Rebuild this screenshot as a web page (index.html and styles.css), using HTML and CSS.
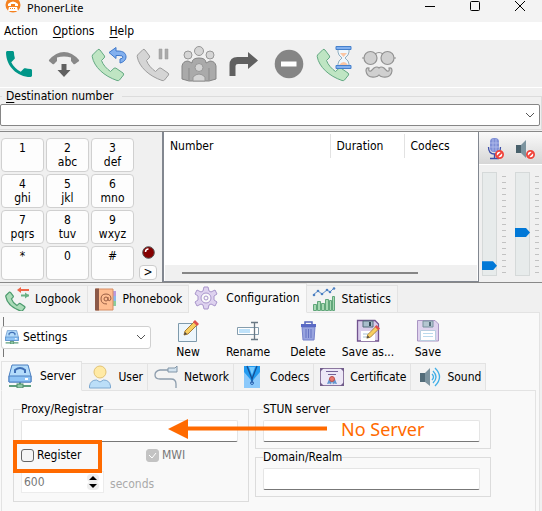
FILE: index.html
```html
<!DOCTYPE html>
<html lang="en">
<head>
<meta charset="utf-8">
<title>PhonerLite</title>
<link rel="stylesheet" href="styles.css">
</head>
<body>
<svg class="defs" aria-hidden="true">
  <symbol id="handset" viewBox="0 0 36 36">
    <path d="M1.500 9 7 3.500Q8 3 9 4L13.500 10Q14 11 13 12L10.500 14.500C12 19 16 23 19.500 25.500L23 22.300Q24 21.700 25 22.200L32 27Q33 28 32.500 29L28.500 34Q27.500 35 26 34.500C13 30 3 21 1.200 10.500Z"/>
  </symbol>
  <symbol id="server" viewBox="0 0 24 24">
    <path d="M12 18v4M1 22h22" stroke="#5d9e7c" stroke-width="2"/>
    <rect x="9" y="20" width="6" height="4" fill="#8fc7a5" stroke="#4c8b69"/>
    <path d="M4 1h16l3 11v6H1v-6z" fill="#b4dcfb" stroke="#4a7fc0"/>
    <path d="M1 12h22v6H1z" fill="#8fc4f5" stroke="#4a7fc0"/>
    <path d="M7 9V6q5-4 10 0v3" fill="none" stroke="#3f6fb5" stroke-width="2"/>
    <path d="M17 15h3" stroke="#fff" stroke-width="2"/>
  </symbol>
  <symbol id="blocked" viewBox="0 0 10 10">
    <circle cx="5" cy="5" r="4" fill="#fff" stroke="#f0433a" stroke-width="2"/>
    <path d="m2.500 7.500 5-5" stroke="#f0433a" stroke-width="2"/>
  </symbol>
  <symbol id="pencil" viewBox="0 0 16 16">
    <path d="m1 15 1-4 9-9 3 3-9 9z" fill="#f8cf62" stroke="#a67b36"/>
    <path d="m10 2 2-2 4 4-2 2z" fill="#e0504e"/>
    <path d="m1 15 1-3 2 2z" fill="#444"/>
  </symbol>
</svg>
<div class="window">
  <header class="titlebar">
    <svg class="logo" viewBox="0 0 16 16"><circle cx="8" cy="5" r="7.500" fill="#f58220"/><path d="M3 4q5-5 10 0v2h-3V4H6v2H3z" fill="#fff"/><path d="M4 7h8l1 4H3z" fill="#fff"/><path d="M5 8.500h6" stroke="#f58220" stroke-dasharray="1 1"/></svg>
    <h1>PhonerLite</h1>
    <div class="winbuttons">
      <button aria-label="Minimize"><svg viewBox="0 0 12 12"><path d="M1 6.500h10"/></svg></button>
      <button aria-label="Maximize"><svg viewBox="0 0 12 12"><rect x="1.500" y="1.500" width="9" height="9" rx="1"/></svg></button>
      <button aria-label="Close"><svg viewBox="0 0 12 12"><path d="m1 1 10 10M11 1 1 11"/></svg></button>
    </div>
  </header>
  <nav class="menubar">
    <button>Action</button><button><u>O</u>ptions</button><button><u>H</u>elp</button>
  </nav>
  <div class="toolbar">
    <button aria-label="Call"><svg viewBox="0 0 36 36"><path transform="translate(.7 .7) scale(1.444)" fill="#009688" d="M6.620 10.790c1.440 2.830 3.760 5.140 6.590 6.590l2.200-2.200c.27-.27.67-.36 1.020-.24 1.120.37 2.330.57 3.570.57.55 0 1 .45 1 1V20c0 .55-.45 1-1 1-9.390 0-17-7.610-17-17 0-.55.45-1 1-1h3.500c.55 0 1 .45 1 1 0 1.250.2 2.450.57 3.570.11.350.03.74-.25 1.020z"/></svg></button>
    <button aria-label="Hang up"><svg viewBox="0 0 36 36"><path d="M3 14Q10 6 18 6t15 8q.500 1-.500 1.500L29 18q-1 .500-1.500 0L25 15v-3.500q-7-2-14 0V15l-3 3q-.500.500-1.500 0l-3-2.500q-1-.500-.500-1.500z" fill="#888"/><path d="M15.500 18h5v6h4L18 31l-6.500-7h4z" fill="#606060"/></svg></button>
    <button aria-label="Call back"><svg viewBox="0 0 36 36"><use href="#handset" fill="#bfe5c3" stroke="#63a982"/><path d="m18 6.500 7-5V5h2c5 0 8 2 8 6 0 3-3 5.500-6 6v-4q3-.500 3-2t-4-1.500h-3v3z" fill="#82b0ef" stroke="#3f78ca"/></svg></button>
    <button aria-label="Hold"><svg viewBox="0 0 36 36"><use href="#handset" fill="#d5d5d5" stroke="#9d9d9d"/><path d="M23 3h3v10h-3zM29 3h3v10h-3z" fill="#aaa" stroke="#999" stroke-width=".5"/></svg></button>
    <button aria-label="Conference"><svg viewBox="0 0 36 36"><g fill="#d5d5d5" stroke="#979797"><circle cx="7" cy="9" r="4"/><circle cx="29" cy="9" r="4"/><circle cx="18" cy="5" r="4.500"/><path d="M1 33V20q1-5 6-5l4 2q0-5 7-5t7 5l4-2q5 0 6 5v13l-7 2H8z" fill="#aaa" stroke="#858585"/><circle cx="18" cy="21.500" r="4"/><path d="M12 35V31q6-6 12 0v4z"/><path d="M8 22v12M28 22v12" stroke="#8b8b8b"/></g></svg></button>
    <button aria-label="Forward"><svg viewBox="0 0 36 36"><path d="M3.500 30V19q0-8 8-8H22V6l10 8.500L22 23v-5H12q-2.500 0-2.500 2v10z" fill="#606060"/></svg></button>
    <button aria-label="Reject"><svg viewBox="0 0 36 36"><circle cx="18" cy="18" r="14.300" fill="#858585"/><path d="M10 15.500h15.500v5H10z" fill="#fff"/></svg></button>
    <button aria-label="Auto answer"><svg viewBox="0 0 36 36"><use href="#handset" fill="#bfe5c3" stroke="#63a982"/><path d="M22 3v3q0 3 4 6-4 3-4 6v2h11v-2q0-3-4-6 4-3 4-6V3z" fill="#eef7fd" stroke="#91aec0"/><path d="M24 7h7l-3.500 4zM23 19q5-6 9 0z" fill="#fac6a4"/><path d="M20 .500h15v3H20zM20 19.500h15v3H20z" fill="#82b0ef" stroke="#4580cc"/></svg></button>
    <button aria-label="Anonymous"><svg viewBox="0 0 36 36"><g fill="#d0d0d0" stroke="#929292" stroke-width="1.200"><circle cx="9.500" cy="12" r="6.500"/><circle cx="26.500" cy="12" r="6.500"/><path d="M14 8q4-3 8 0M1 12h2M33 12h2" fill="none"/><path d="M18 22q2-2 5 0l3 3q3 1 2-3 3-1 3 3-1 7-9 6-3-.500-4-2-1 1.500-4 2-8 1-9-6 0-4 3-3-1 4 2 3l3-3q3-2 5 0z"/></g></svg></button>
  </div>
  <fieldset class="destination">
    <legend><label for="dest"><u>D</u>estination number</label></legend>
    <select id="dest"><option></option></select>
  </fieldset>

  <main class="dialer">
    <section class="keys">
      <div class="keypad">
        <button>1</button><button>2<br>abc</button><button>3<br>def</button>
        <button>4<br>ghi</button><button>5<br>jkl</button><button>6<br>mno</button>
        <button>7<br>pqrs</button><button>8<br>tuv</button><button>9<br>wxyz</button>
        <button>*</button><button>0</button><button>#</button>
      </div>
      <div class="side">
        <svg class="led" viewBox="0 0 13 13"><circle cx="6.500" cy="6.500" r="5.800" fill="#850000" stroke="#555"/><path d="M3.500 6q0-3 3-3" fill="none" stroke="#fff" stroke-width="1.500"/></svg>
        <button class="more">&gt;</button>
      </div>
    </section>
    <section class="calls">
      <table>
        <thead><tr><th class="number">Number</th><th>Duration</th><th>Codecs</th></tr></thead>
      </table>
      <div class="scrollbar"><div class="thumb"></div></div>
    </section>
    <section class="levels">
      <div class="mutes">
        <button aria-label="Mute microphone"><svg viewBox="0 0 20 24"><rect x="4" y="1" width="9" height="14" rx="4" fill="#7f8fd6"/><path d="M7 2v12M10 2v12M4 6h9M4 10h9" stroke="#adb8ea"/><path d="M2.500 10q0 7 6 7t6-7M8.500 17v4M4 21.500h9" fill="none" stroke="#3d4fa8" stroke-width="1.300"/><use href="#blocked" x="9" y="13" width="9" height="9"/></svg></button>
        <button aria-label="Mute speaker"><svg viewBox="0 0 20 24"><path d="M0 8h5v8H0z" fill="#49616c"/><path d="m5 8 5-5v18l-5-5z" fill="#7c949f"/><use href="#blocked" x="10" y="13" width="9" height="9"/></svg></button>
      </div>
      <div class="sliders">
        <input type="range" aria-label="Microphone level" min="0" max="100" value="5"><span class="ticks"></span>
        <input type="range" aria-label="Speaker level" min="0" max="100" value="41"><span class="ticks"></span>
      </div>
    </section>
  </main>

  <div class="tabs main-tabs" role="tablist">
    <button role="tab"><svg viewBox="0 0 24 24"><use href="#handset" y="3" width="22" height="22" fill="#aadbb7" stroke="#4c9a6d" stroke-width="2"/><path d="M24 8.500h-8" stroke="#69b184" stroke-width="2"/><path d="M24 3H14" stroke="#ef6548" stroke-width="2"/><path d="m12 3 4-3v6z" fill="#ef6548"/><path d="m24 8.500-4-3v6z" fill="#69b184"/></svg>Logbook</button>
    <button role="tab"><svg viewBox="0 0 24 24"><path d="M20 4h3v5h-3z" fill="#b89be0"/><path d="M20 9h3v5h-3z" fill="#8ab9ee"/><path d="M20 14h3v5h-3z" fill="#8ace9c"/><path d="M3 2h17v21H3z" fill="#ffbd91" stroke="#d68d65"/><path d="M2 1.500h4v22H2z" fill="#8c5948"/><circle cx="13" cy="12" r="2" fill="none" stroke="#995d43"/><path d="M15 10v3q2 2 3-1 0-5-5-5t-5 5q0 5 6 5" fill="none" stroke="#995d43"/></svg>Phonebook</button>
    <button role="tab" aria-selected="true"><svg viewBox="0 0 24 24"><path d="m9 5 1-4h4l1 4 2 1 4-2 2 4-3 2v4l3 2-2 4-4-2-2 1-1 4h-4l-1-4-2-1-4 2-2-4 3-2v-4L1 8l2-4 4 2z" fill="#ded2ef" stroke="#a895cb"/><circle cx="12" cy="12" r="5" fill="#fafafa" stroke="#a895cb"/><circle cx="12" cy="12" r="2" fill="none" stroke="#a895cb"/></svg>Configuration</button>
    <button role="tab"><svg viewBox="0 0 24 24"><path d="m1 8 5-4 4 3 5-4 3 2 4-4" fill="none" stroke="#5c8cc9"/><g fill="#4c80c2"><circle cx="2" cy="8" r="1.300"/><circle cx="6" cy="4" r="1.300"/><circle cx="10" cy="7" r="1.300"/><circle cx="15" cy="3" r="1.300"/><circle cx="18" cy="5" r="1.300"/><circle cx="22" cy="1.500" r="1.300"/></g><path d="M1.500 17.500h3v6h-3zM5.500 14.500h3v9h-3zM9.500 16.500h3v7h-3zM13.500 12.500h3v11h-3zM17.500 13.500h2v10h-2zM20.500 9.500h2v14h-2z" fill="#a6d8b2" stroke="#61a77a"/></svg>Statistics</button>
  </div>

  <section class="config">
    <div class="profile">
      <div class="profile-pick">
        <svg viewBox="0 0 24 24"><use href="#server"/></svg>
        <select aria-label="Profile"><option>Settings</option></select>
      </div>
      <div class="actions">
        <button><svg viewBox="0 0 24 24"><path d="M2.500 4.500h18v18h-18z" fill="#edf6fc" stroke="#7e9aac"/><use href="#pencil" x="7" y="1" width="16" height="16"/></svg>New</button>
        <button><svg viewBox="0 0 24 24"><path d="M1.500 8.500h21v7h-21z" fill="#fff" stroke="#859dad"/><path d="M3 10h11v4H3z" fill="#bfe2fa"/><path d="M15 3.500h3.500v17M22 3.500h-4M15 20.500h7" fill="none" stroke="#6a7984" stroke-width="1.300"/></svg>Rename</button>
        <button><svg viewBox="0 0 24 24"><path d="M9 5V3h7v2" fill="none" stroke="#5464bb" stroke-width="1.500"/><path d="M6 8h13l-1 13H7z" fill="#98a4df" stroke="#7481ca"/><path d="M5 5h15v3H5z" fill="#5969c4"/><path d="M10 10v9M12.500 10v9M15 10v9" stroke="#6472c2"/></svg>Delete</button>
        <button><svg viewBox="0 0 24 24"><path d="M1.500 1.500H19l3.500 3.500v17h-21z" fill="#d9ccea" stroke="#71538f" stroke-width="1.300"/><path d="M7 2h10v6H7z" fill="#a8bdcb" stroke="#526b7b"/><path d="M13 3h2v4h-2z" fill="#344854"/><path d="M5 12h14v10H5z" fill="#fff"/><path d="M7 15h6M7 18h6" stroke="#a5c2d5"/><use href="#pencil" x="10" y="6" width="14" height="14"/></svg>Save as...</button>
        <button><svg viewBox="0 0 24 24"><path d="M1.500 1.500H19l3.500 3.500v17h-21z" fill="#dfd3ee" stroke="#aa96c4"/><path d="M7 2h10v6H7z" fill="#b4c6d1" stroke="#79909e"/><path d="M13 3h2v4h-2z" fill="#536b79"/><path d="M4.500 11.500h15v10h-15z" fill="#fff" stroke="#b9cee0"/><path d="M7 14.500h10M7 17.500h10" stroke="#badaec"/></svg>Save</button>
      </div>
    </div>

    <div class="tabs sub-tabs" role="tablist">
      <button role="tab" aria-selected="true"><svg viewBox="0 0 24 24"><use href="#server"/></svg>Server</button>
      <button role="tab"><svg viewBox="0 0 24 24"><circle cx="12" cy="7" r="6" fill="#ffeaa5" stroke="#e2c373"/><path d="M1.500 23v-2q1-6 7-6l3.500 2 3.500-2q6 0 7 6v2z" fill="#bbdef8" stroke="#7da9d1"/></svg>User</button>
      <button role="tab"><svg viewBox="0 0 24 24"><path d="M14 5H6Q1 6 1 10t5 4h11q5 0 5 5v4" fill="none" stroke="#8d9dad" stroke-width="1.300"/><path d="M14 3h7l2-2v6h-9z" fill="#d3e3ef" stroke="#8195a7"/></svg>Network</button>
      <button role="tab"><svg viewBox="0 0 24 24"><path d="M4 1h16v22H4z" fill="#8bc9fb"/><path d="M4 1h16v6l-6 7-2 3-2-3-6-7z" fill="#239bf0"/><path d="m7 1 5 13 5-13M12 13v5" fill="none" stroke="#174f94" stroke-width="1.300"/><path d="m9 2 3 8 3-8" fill="#78cbff"/><circle cx="12" cy="18" r="1.500" fill="none" stroke="#2f66b4"/></svg>Codecs</button>
      <button role="tab"><svg viewBox="0 0 24 24"><path d="M.500 3.500h23v17H.500z" fill="#ede8f7" stroke="#8b769f"/><path d="M0 3h4L0 7zM24 3v4l-4-4zM0 21v-4l4 4zM24 21h-4l4-4z" fill="#725d8b"/><path d="M6 6.500h12M8 9.500h8" stroke="#756398"/><path d="m9 14-2 5 3-.500 1 1 1-3 1 3 1-1 3 .500-2-5z" fill="#6496cf"/><circle cx="12" cy="14" r="2.500" fill="#e9776f" stroke="#b94e4a"/></svg>Certificate</button>
      <button role="tab"><svg viewBox="0 0 24 24"><path d="M3 8h5v9H3z" fill="#536c79"/><path d="m8 8 5-5v18l-5-4z" fill="#7c939f"/><path d="M15 9q3 3 0 6M16 6q6 6 0 12M18 3q9 9 0 18" fill="none" stroke="#42afe7" stroke-width="1.300"/></svg>Sound</button>
    </div>

    <div class="server-page">
      <fieldset class="group proxy">
        <legend><label for="proxy">Proxy/Registrar</label></legend>
        <input type="text" id="proxy" class="field">
        <div class="checks">
          <div class="register"><input type="checkbox" id="register"><label for="register">Register</label><span class="highlight"></span></div>
          <div class="mwi"><input type="checkbox" id="mwi" checked disabled><label for="mwi">MWI</label></div>
        </div>
        <div class="expiry">
          <div class="spinner">
            <input type="text" id="expiry" value="600" disabled>
            <div class="spin-buttons"><button aria-label="Increase"><svg viewBox="0 0 12 8"><path d="m6 2 4 4H2z"/></svg></button><button aria-label="Decrease"><svg viewBox="0 0 12 8"><path d="m6 6 4-4H2z"/></svg></button></div>
          </div>
          <label for="expiry">seconds</label>
        </div>
      </fieldset>
      <div class="column">
        <fieldset class="group">
          <legend><label for="stun">STUN server</label></legend>
          <input type="text" id="stun" class="field">
        </fieldset>
        <fieldset class="group">
          <legend><label for="realm">Domain/Realm</label></legend>
          <input type="text" id="realm" class="field">
        </fieldset>
      </div>
      <div class="note">
        <svg viewBox="0 0 160 20"><path d="M0 10 20 0v20z" fill="#ff6a00"/><path d="M18 9.500h141" stroke="#ff6a00" stroke-width="4"/></svg>
        <span>No Server</span>
      </div>
    </div>
  </section>
</div>
</body>
</html>
```
FILE: styles.css
```css
* { box-sizing: border-box; }

body {
  margin: 0;
  background: #f0f0f0;
  color: #000;
  font: 12px/14px "DejaVu Sans Condensed", "DejaVu Sans", sans-serif;
}

button, input, select {
  margin: 0;
  padding: 0;
  border: 0;
  background: none;
  color: inherit;
  font: inherit;
}

fieldset { margin: 0; padding: 0; border: 0; min-width: 0; }
svg { display: block; }
u { text-underline-offset: 2px; }
.defs { position: absolute; width: 0; height: 0; }

.window {
  display: flex;
  flex-direction: column;
  min-height: 100vh;
  overflow: hidden;
}

/* Title bar, menu, toolbar */
.titlebar {
  display: flex;
  align-items: flex-start;
  height: 22px;
  padding-left: 5px;
  background: #f3f3f3;
}
.logo { width: 16px; height: 16px; }
.titlebar h1 {
  flex: 1;
  margin: 0 0 0 6px;
  font: 11px/16px "Noto Sans", sans-serif;
}
.winbuttons { display: flex; }
.winbuttons button { width: 45px; height: 12px; }
.winbuttons svg {
  width: 12px;
  height: 12px;
  margin: 0 auto;
  fill: none;
  stroke: #000;
}

.menubar {
  display: flex;
  gap: 15px;
  height: 18px;
  padding-left: 4px;
  background: #fff;
}

.toolbar {
  display: flex;
  gap: 9px;
  height: 48px;
  padding: 6px 0 0 1px;
  border-bottom: 1px solid #fff;
}
.toolbar button, .toolbar svg { width: 36px; height: 36px; }

/* Destination */
.destination {
  padding-bottom: 3px;
  border: 1px solid #dcdcdc;
  border-left: 0;
  margin: 1px 0;
}
.destination legend { margin-left: 2px; padding: 0 8px 0 4px; }
.destination select {
  display: block;
  width: calc(100% - 1px);
  height: 22px;
  margin-top: 1px;
  border: 1px solid #868686;
  border-radius: 2px;
}
select {
  appearance: none;
  background: #fff url("data:image/svg+xml,%3Csvg xmlns='http://www.w3.org/2000/svg' width='10' height='6'%3E%3Cpath d='m1 1 4 4 4-4' fill='none' stroke='%23555'/%3E%3C/svg%3E") no-repeat right 4px center;
}

/* Keypad, call list, levels */
.dialer {
  display: grid;
  grid-template-columns: 162px 1fr 63px;
  height: 152px;
  border-top: 1px solid #888;
  border-bottom: 1px solid #888;
}
.keys { display: flex; gap: 5px; padding: 6px 0 0 1px; }
.keypad {
  display: grid;
  grid-template-columns: repeat(3, 43px);
  grid-auto-rows: 34px;
  gap: 2px;
}
.keypad button {
  display: flex;
  flex-direction: column;
  align-items: center;
  padding-top: 2px;
  border: 1px solid #d0d0d0;
  border-radius: 4px;
  background: #fdfdfd;
}
.side {
  display: flex;
  flex-direction: column;
  align-items: center;
  justify-content: flex-end;
  gap: 6px;
  padding-bottom: 2px;
}
.led { width: 13px; height: 13px; }
.more {
  width: 18px;
  height: 15px;
  border: 1px solid #ccc;
  border-radius: 4px;
  background: #fdfdfd;
  line-height: 13px;
}

.calls {
  display: flex;
  flex-direction: column;
  justify-content: space-between;
  border: 1px solid #828790;
  border-left-width: 2px;
  border-top: 0;
  background: #fff;
}
.calls table { width: 100%; margin-top: 2px; border-collapse: collapse; table-layout: fixed; }
.calls th {
  width: 74px;
  height: 24px;
  padding: 0 0 0 6px;
  border-left: 1px solid #e2e2e2;
  font-weight: normal;
  text-align: left;
}
.calls .number { width: auto; border: 0; }
.scrollbar { padding: 7px 59px 7px 17px; margin: 0 1px; background: #f0f0f0; }
.thumb { height: 2px; background: #868686; }

.levels { overflow: hidden; }
.mutes {
  display: flex;
  gap: 10px;
  height: 33px;
  padding: 5px 0 0 7px;
  border-bottom: 1px solid #fff;
  background: linear-gradient(#fafafa, #d6d6d6);
}
.mutes button, .mutes svg { width: 20px; height: 24px; }
.sliders { display: flex; padding: 7px 0 0 3px; }
.sliders input {
  flex: none;
  appearance: none;
  writing-mode: vertical-lr;
  direction: rtl;
  width: 15px;
  height: 104px;
  border: 1px solid #d5d9d9;
  background: #e7ebeb;
}
.sliders input::-webkit-slider-thumb {
  appearance: none;
  width: 15px;
  height: 9px;
  background: #0078d7;
  clip-path: polygon(0 0, 11px 0, 100% 50%, 11px 100%, 0 100%);
}
.ticks {
  flex: none;
  width: 4px;
  height: 98px;
  margin: 4px 9px 0 5px;
  background: repeating-linear-gradient(#c2c2c2 0 1px, transparent 1px 6px);
}

/* Tabs */
.tabs { display: flex; align-items: flex-end; }
.tabs button {
  display: flex;
  align-items: center;
  gap: 6px;
  height: 28px;
  border: 1px solid #e3e3e3;
  border-left: 0;
  background: #f3f3f3;
  white-space: nowrap;
}
.tabs svg { width: 24px; height: 24px; }
.tabs [aria-selected] {
  gap: 8px;
  height: 30px;
  border-bottom-color: #f9f9f9;
  background: #f9f9f9;
}
.main-tabs button { padding: 0 6px 0 5px; }
.main-tabs { position: relative; margin-bottom: -1px; }
.sub-tabs button { padding: 0 4px 0 6px; }
.sub-tabs { position: relative; z-index: 1; }
.sub-tabs [aria-selected] { padding-right: 6px; border-left: 1px solid #e3e3e3; }

/* Configuration page */
.config {
  flex: 1;
  display: flex;
  flex-direction: column;
  margin-right: 2px;
  padding: 4px 3px 0 1px;
  border: 1px solid #e3e3e3;
  border-width: 1px 1px 0 0;
  background: #f9f9f9;
}
.profile { display: flex; height: 44px; }
.profile-pick {
  position: relative;
  display: flex;
  align-items: center;
  width: 150px;
  height: 40px;
  background: linear-gradient(#777, #777) 2px 0 / 1px 100% no-repeat;
}
.profile-pick svg { position: absolute; left: 4px; width: 14px; height: 14px; }
.profile-pick select {
  width: 100%;
  height: 23px;
  padding-left: 21px;
  border: 1px solid #d0d0d0;
  border-radius: 3px;
}
.actions { display: flex; margin-left: 7px; }
.actions button {
  display: flex;
  flex-direction: column;
  align-items: center;
  gap: 2px;
  width: 60px;
  padding-top: 2px;
}
.actions svg { width: 24px; height: 24px; }

.server-page {
  position: relative;
  flex: 1;
  display: flex;
  align-items: flex-start;
  gap: 6px;
  margin-top: -1px;
  padding: 11px 11px 8px;
  border: 1px solid #e3e3e3;
  border-bottom: 0;
}
.group {
  width: 236px;
  padding: 0 10px 6px 7px;
  border: 1px solid #dcdcdc;
}
.group legend { padding: 0; }
.group .field { margin-top: 4px; }
.field {
  display: block;
  width: 100%;
  height: 22px;
  padding: 0 4px;
  border: 1px solid #e5e5e5;
  border-bottom-color: #777;
  border-radius: 2px;
  background: #fff;
}
.column { display: flex; flex-direction: column; gap: 1px; }
.proxy { padding-bottom: 8px; }

.checks { display: grid; grid-template-columns: 125px 1fr; margin-top: 6px; }
.register, .mwi { position: relative; display: flex; align-items: center; gap: 3px; }
.mwi { color: #777; }
input[type="checkbox"] {
  appearance: none;
  width: 13px;
  height: 13px;
  border: 1px solid #666;
  border-radius: 3px;
  background: #f5f5f5;
}
#mwi {
  border-color: #c3c3c3;
  background: #c3c3c3 url("data:image/svg+xml,%3Csvg xmlns='http://www.w3.org/2000/svg' width='11' height='11'%3E%3Cpath d='m2 5 3 3 4-5' fill='none' stroke='white'/%3E%3C/svg%3E") center;
}
.highlight {
  position: absolute;
  top: -8px;
  left: -8px;
  width: 89px;
  height: 33px;
  border: 4px solid #ff6a00;
  pointer-events: none;
}
.expiry { display: flex; align-items: center; gap: 6px; margin-top: 9px; color: #aaa; }
.expiry label { padding-top: 4px; }
.spinner {
  display: flex;
  width: 83px;
  height: 22px;
  border: 1px solid #ececec;
  background: #fff;
}
.spinner input { flex: 1; width: 0; padding-left: 2px; color: #777; }
.spin-buttons { display: flex; flex-direction: column; justify-content: center; width: 16px; }
.spin-buttons button { width: 12px; height: 8px; border-radius: 4px; background: #eee; }
.spin-buttons svg { width: 12px; height: 8px; }

.note {
  position: absolute;
  top: 28px;
  left: 166px;
  display: flex;
  align-items: center;
  gap: 13px;
  color: #ff6a00;
  font: 18px/20px "Noto Sans", sans-serif;
  pointer-events: none;
}
.note svg { width: 160px; height: 20px; }
```
